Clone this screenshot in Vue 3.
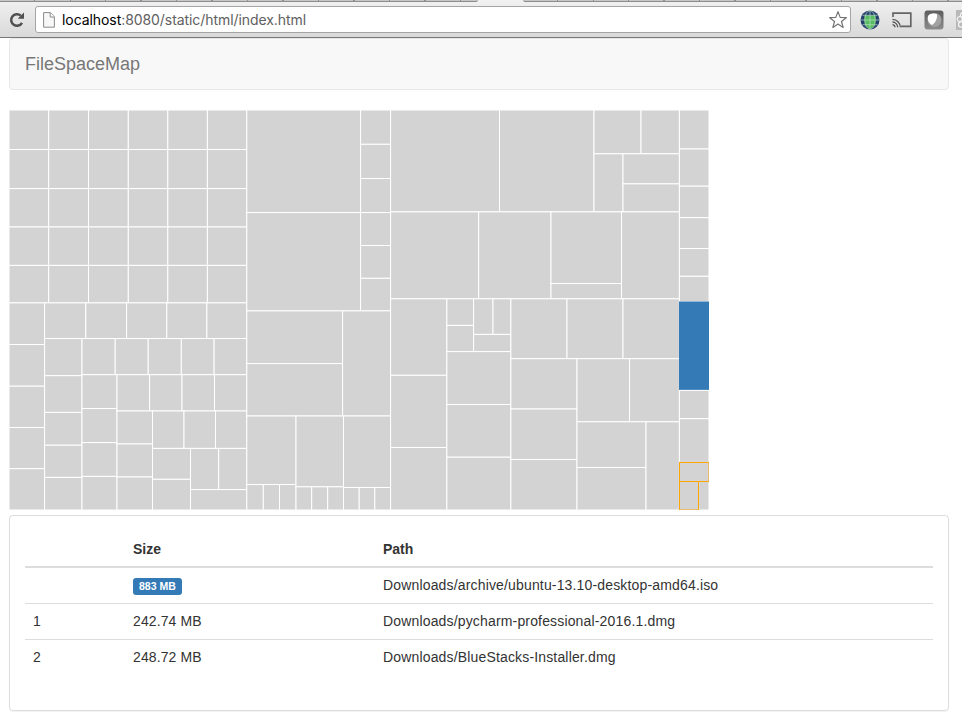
<script setup>
const cells = []

const add = (x0, y0, x1, y1, kind = 'file') =>
  cells.push({ x: x0, y: y0, w: x1 - x0, h: y1 - y0, kind })

// A band split by vertical cuts; xs includes both ends.
const row = (y0, y1, xs) => {
  for (let i = 1; i < xs.length; i++) add(xs[i - 1], y0, xs[i], y1)
}
// A band split by horizontal cuts; ys includes both ends.
const col = (x0, x1, ys) => {
  for (let i = 1; i < ys.length; i++) add(x0, ys[i - 1], x1, ys[i])
}

// Left region
const grid = [110, 149.5, 188.6, 227, 265.4, 302.9]
for (let i = 1; i < grid.length; i++) {
  row(grid[i - 1], grid[i], [9, 48.7, 88.5, 128.3, 167.8, 207.4, 246.8])
}
col(9, 44.6, [302.9, 344.5, 386.2, 427.5, 468.7, 510])
row(302.9, 338.5, [44.6, 85.8, 126.6, 166.8, 206.9, 246.8])
col(44.6, 82, [338.5, 375.7, 412.4, 445.2, 477.4, 510])
row(338.5, 374.7, [82, 115.2, 148.2, 181.3, 214.1, 246.8])
col(82, 117, [374.7, 408.5, 442.6, 476.4, 510])
row(374.7, 411, [117, 149.6, 182, 214.5, 246.8])
col(117, 152.5, [411, 444, 477, 510])
row(411, 448.4, [152.5, 184, 215.5, 246.8])
col(152.5, 190.5, [448.4, 479.3, 510])
row(448.4, 489.6, [190.5, 218.7, 246.8])
add(190.5, 489.6, 246.8, 510)

// Middle region
add(246.8, 110, 360.6, 212.6)
col(360.6, 390.6, [110, 144.3, 178.5, 212.6])
add(246.8, 212.6, 360.6, 310.9)
col(360.6, 390.6, [212.6, 245.5, 278.3, 310.9])
col(246.8, 342.6, [310.9, 363.6, 416])
add(342.6, 310.9, 390.6, 416)
add(246.8, 416, 296, 484.5)
row(484.5, 510, [246.8, 263.3, 279.5, 296])
add(296, 416, 343.5, 486.8)
row(486.8, 510, [296, 311.7, 327.7, 343.5])
add(343.5, 416, 390.6, 487.5)
row(487.5, 510, [343.5, 359.2, 374.8, 390.6])

// Right region
row(110, 211.9, [390.6, 499.5, 594])
row(110, 153.8, [594, 641, 679.4])
add(594, 153.8, 623, 211.9)
col(623, 679.4, [153.8, 183.9, 211.9])
row(211.9, 298.8, [390.6, 478.7, 551])
col(551, 621.5, [211.9, 283.5, 298.8])
add(621.5, 211.9, 679.4, 298.8)
col(390.6, 446.9, [298.8, 375.3, 447.5, 510])
col(446.9, 473.6, [298.8, 325.4, 351.6])
row(298.8, 334.4, [473.6, 493, 510.9])
add(473.6, 334.4, 510.9, 351.6)
col(446.9, 510.9, [351.6, 404.5, 457.2, 510])
row(298.8, 358.7, [510.9, 567, 623, 679.4])
col(510.9, 577, [358.7, 409, 459.5, 510])
row(358.7, 421.8, [577, 629.5, 679.4])
col(577, 646, [421.8, 467.5, 510])
add(646, 421.8, 679.4, 510)

// Last column, holding the selected file and its matches
col(679.4, 709, [110, 149, 186.2, 217.7, 248.5, 276.3, 301.8])
add(679.5, 302, 709, 389.8, 'selected')
col(679.4, 709, [390.4, 418.7, 462.4])
add(698.6, 481.5, 709, 510)
add(679.5, 462.5, 709, 481.5, 'match')
add(679.5, 481.5, 698.5, 510, 'match')

const files = [
  { n: '', size: '883 MB', path: 'Downloads/archive/ubuntu-13.10-desktop-amd64.iso', badge: true },
  { n: '1', size: '242.74 MB', path: 'Downloads/pycharm-professional-2016.1.dmg' },
  { n: '2', size: '248.72 MB', path: 'Downloads/BlueStacks-Installer.dmg' },
]
</script>

<template>
  <div class="window">
    <header class="chrome">
      <div class="tabs">
        <div class="tabs-left"></div>
        <div class="tabs-right"></div>
      </div>
      <div class="toolbar">
        <svg class="reload" width="18" height="18" viewBox="0 0 18 18">
          <path d="M14 11.800A5.800 5.800 0 1 1 12.800 4.600" fill="none" stroke="#505050" stroke-width="2.500" />
          <path d="M16 1.500V7.800H9.700Z" fill="#505050" />
        </svg>
        <div class="address">
          <svg class="page" width="12" height="16" viewBox="0 0 12 16">
            <path d="M.6.6H7.4L11.4 4.8V15.2H.6Z" fill="#f7f7f7" stroke="#8b8b8b" />
            <path d="M7.2.8V5H11.2" fill="#fff" stroke="#8b8b8b" />
          </svg>
          <span class="url"><b>localhost</b>:8080/static/html/index.html</span>
          <svg class="star" width="20" height="20" viewBox="0 0 20 20">
            <path d="M10 1.6 12.2 7.4 18.3 7.7 13.5 11.5 15.1 17.4 10 14.1 4.9 17.4 6.5 11.5 1.7 7.7 7.8 7.4Z" fill="#fff" stroke="#737373" stroke-width="1.2" stroke-linejoin="round" />
          </svg>
        </div>
        <div class="extensions">
          <svg width="20" height="20" viewBox="0 0 20 20">
            <circle cx="10" cy="10" r="9.5" fill="#263f6d" />
            <path d="M4.5 5.5H15.5V11C15.5 15 13.5 17.5 10 19 6.500 17.5 4.500 15 4.500 11Z" fill="#58bd60" />
            <g fill="none" stroke="#b5dfc0" stroke-width=".7">
              <ellipse cx="10" cy="10" rx="5.200" ry="9.300" />
              <path d="M10 .5V19.500M.5 10H19.500M2.500 5.300H17.500M2.500 14.700H17.500" />
            </g>
          </svg>
          <svg width="20" height="16" viewBox="0 0 20 16">
            <path d="M1 5V1.200H18.800V14.300H9" fill="none" stroke="#656565" stroke-width="1.700" />
            <g fill="none" stroke="#555" stroke-width="1.300">
              <path d="M.5 12.700A2.500 2.500 0 0 1 3 15.300M.5 10A5.300 5.300 0 0 1 5.700 15.300M.5 7.400A8 8 0 0 1 8.300 15.300" />
            </g>
          </svg>
          <svg width="20" height="20" viewBox="0 0 20 20">
            <defs>
              <linearGradient id="shade" x2="0" y2="1">
                <stop stop-color="#5c5c5c" />
                <stop offset="1" stop-color="#8d8d8d" />
              </linearGradient>
            </defs>
            <rect x=".5" y=".5" width="19" height="19" rx="3" fill="url(#shade)" />
            <circle cx="10.500" cy="10" r="7" fill="#a2a2a2" />
            <path d="M4 6C6 3.200 10 3 13 4.300 13.500 9 11.500 12.500 8 15 4.500 13 3 9.500 4 6Z" fill="#fff" />
          </svg>
          <svg class="cut" width="7" height="20" viewBox="0 0 7 20">
            <rect width="20" height="20" fill="#b9b9b9" />
            <g fill="none" stroke="#f4f4f4" stroke-width="1.200">
              <circle cx="7" cy="5" r="2.600" />
              <circle cx="3.800" cy="9" r="2.500" />
              <circle cx="5.200" cy="14.500" r="2.700" />
            </g>
          </svg>
        </div>
      </div>
    </header>

    <nav class="navbar">FileSpaceMap</nav>

    <svg class="treemap" width="700" height="400" viewBox="9 110 700 400">
      <rect
        v-for="(c, i) in cells"
        :key="i"
        :class="c.kind"
        :x="c.x"
        :y="c.y"
        :width="c.w"
        :height="c.h"
      />
    </svg>

    <section class="panel">
      <table>
        <thead>
          <tr>
            <th class="num"></th>
            <th class="size">Size</th>
            <th>Path</th>
          </tr>
        </thead>
        <tbody>
          <tr v-for="f in files" :key="f.path">
            <td>{{ f.n }}</td>
            <td class="amount"><span :class="{ label: f.badge }">{{ f.size }}</span></td>
            <td class="path">{{ f.path }}</td>
          </tr>
        </tbody>
      </table>
    </section>
  </div>
</template>

<style>
html,
body {
  margin: 0;
  background: #fff;
  overflow: hidden;
}
</style>

<style scoped>
.window {
  box-sizing: border-box;
  width: 962px;
  height: 718px;
  overflow: hidden;
  font: 14px/20px "Liberation Sans", Arial, sans-serif;
  color: #333;
}
.chrome {
  box-sizing: border-box;
  height: 38px;
  border-bottom: 1px solid #777;
  background: linear-gradient(#f1f1f1, #d9d9d9);
}
.tabs {
  display: flex;
  gap: 45px;
  height: 2px;
}
.tabs-left,
.tabs-right {
  box-sizing: border-box;
  border-bottom: 1px solid #8c8e8c;
  background: repeating-linear-gradient(90deg, #c5c8c5 0 34px, #8e908e 34px 35.5px);
}
.tabs-left {
  width: 478px;
  border-bottom-right-radius: 2px;
}
.tabs-right {
  flex: 1;
  border-bottom-left-radius: 2px;
}
.toolbar {
  display: flex;
  align-items: center;
  height: 35px;
  padding-left: 8px;
}
.toolbar svg {
  flex: none;
}
.reload {
  margin-right: 9px;
}
.address {
  box-sizing: border-box;
  display: flex;
  flex: none;
  align-items: center;
  width: 816px;
  height: 27px;
  padding: 0 2px 0 7px;
  border: 1px solid #a5a5a5;
  border-radius: 3px;
  background: #fff;
}
.url {
  flex: 1;
  margin-left: 7px;
  font: 14px/20px Inter, sans-serif;
  letter-spacing: -0.07px;
  color: #606060;
}
.url b {
  font-weight: 400;
  color: #000;
}
.extensions {
  display: flex;
  flex: none;
  align-items: center;
  gap: 12px;
  margin-left: 9px;
}
.navbar {
  box-sizing: border-box;
  width: 940px;
  height: 52px;
  margin-left: 9px;
  padding: 15px;
  border: 1px solid #e7e7e7;
  border-radius: 4px;
  background: #f8f8f8;
  font-size: 18px;
  color: #777;
}
.treemap {
  display: block;
  margin: 20px 0 0 9px;
}
.file {
  fill: #d3d3d3;
  stroke: #fff;
}
.selected {
  fill: #337ab7;
  stroke: #337ab7;
}
.match {
  fill: #d3d3d3;
  stroke: orange;
}
.panel {
  box-sizing: border-box;
  width: 940px;
  height: 196px;
  margin: 5px 0 0 9px;
  padding: 15px;
  border: 1px solid #ddd;
  border-radius: 4px;
  box-shadow: 0 1px 1px rgba(0, 0, 0, 0.05);
}
table {
  width: 908px;
  border-collapse: collapse;
  table-layout: fixed;
}
th {
  padding: 8px 8px 7px;
  border-bottom: 2px solid #ddd;
  text-align: left;
}
td {
  height: 20px;
  padding: 7px 8px 8px;
  border-top: 1px solid #ddd;
}
.num {
  width: 84px;
}
.size {
  width: 234px;
}
.amount {
  letter-spacing: 0.1px;
}
.path {
  letter-spacing: 0.16px;
}
.label {
  display: inline-block;
  padding: 3px 6px;
  border-radius: 3px;
  background: #337ab7;
  color: #fff;
  font-size: 10.5px;
  font-weight: 700;
  line-height: 11px;
  letter-spacing: 0;
}
</style>
